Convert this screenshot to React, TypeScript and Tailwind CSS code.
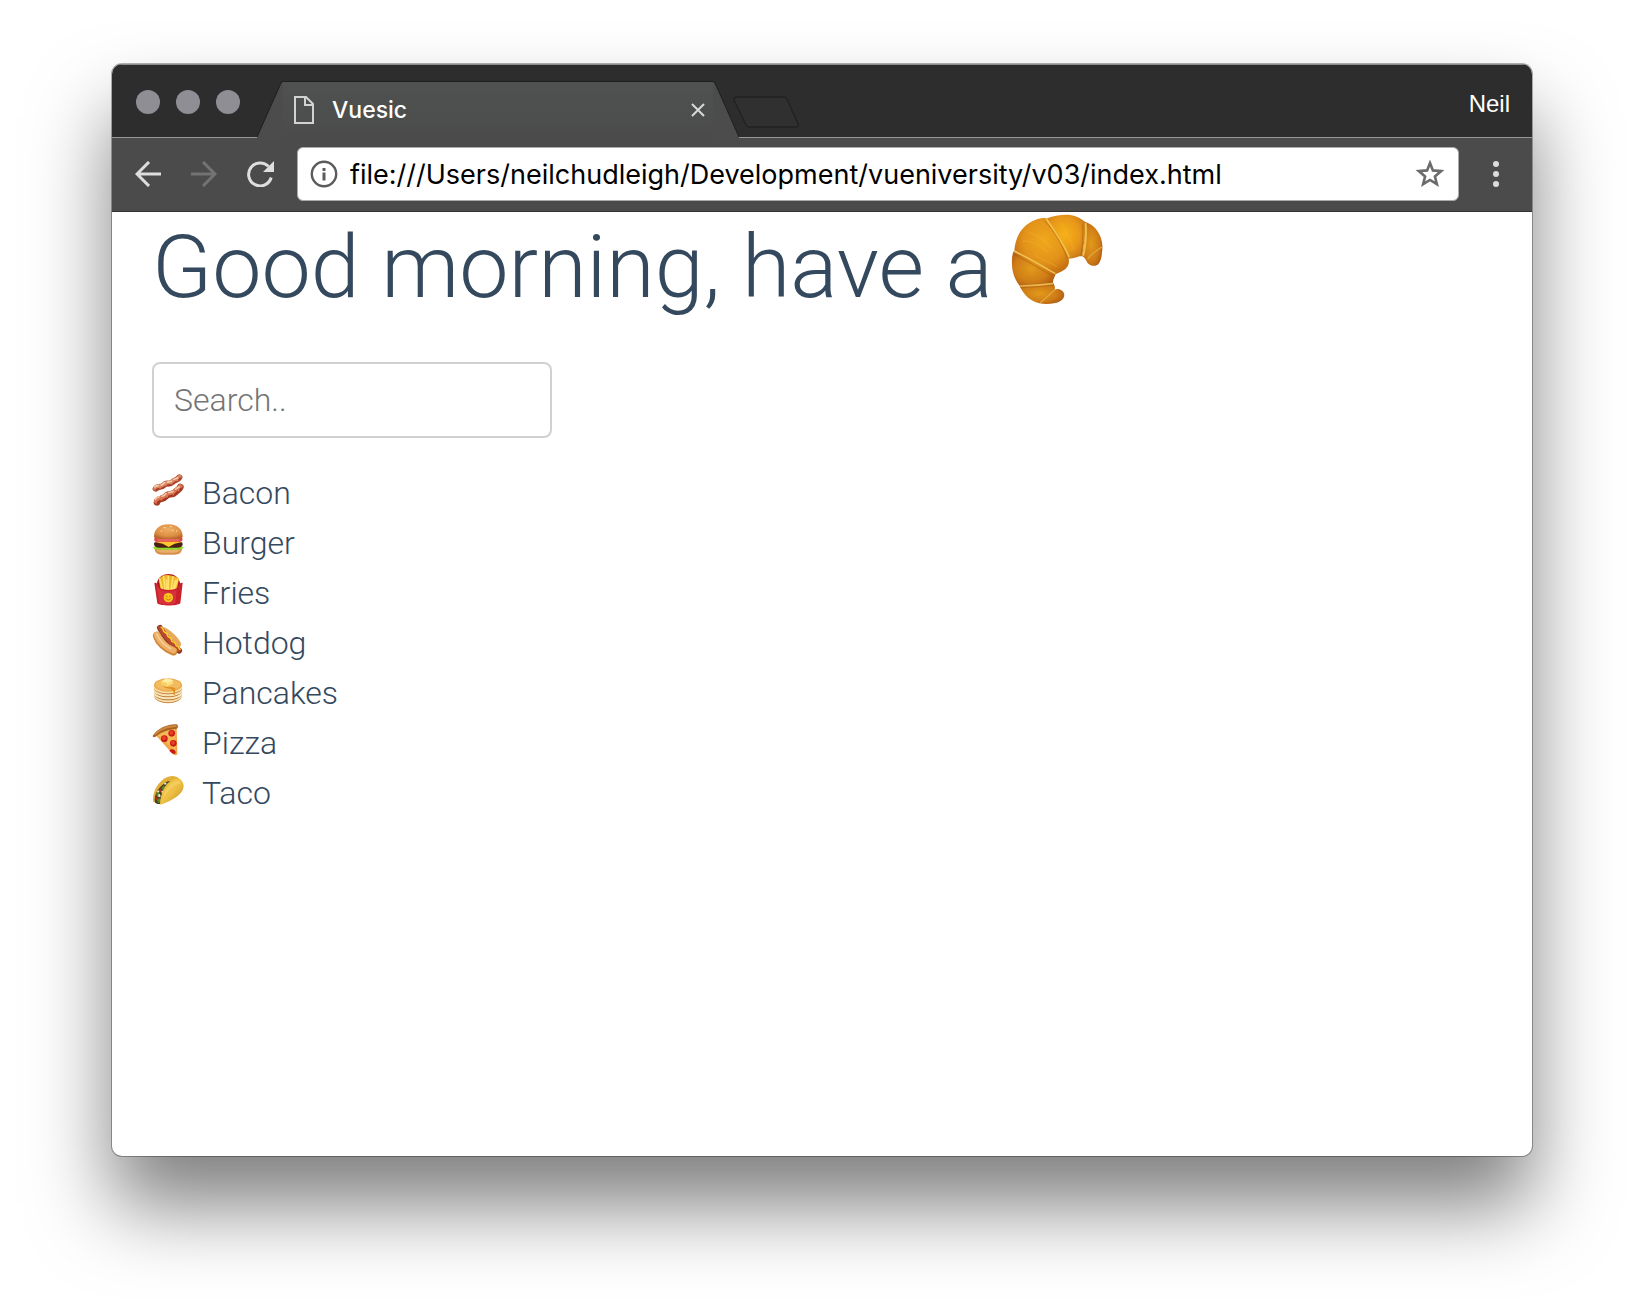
import React, { useState } from 'react';

type IconProps = { className?: string };

/* ---------- food drawings ---------- */

const Croissant: React.FC<IconProps> = ({ className }) => (
  <svg viewBox="33 27 276 276" className={className} role="img" aria-label="croissant">
    <defs>
      <radialGradient id="cr-a" cx="0.55" cy="0.4" r="0.65">
        <stop offset="0" stopColor="#f0a81c" />
        <stop offset="0.6" stopColor="#e2921a" />
        <stop offset="1" stopColor="#c06a12" />
      </radialGradient>
      <radialGradient id="cr-b" cx="0.45" cy="0.45" r="0.65">
        <stop offset="0" stopColor="#f6b116" />
        <stop offset="0.6" stopColor="#e8981a" />
        <stop offset="1" stopColor="#c27618" />
      </radialGradient>
      <radialGradient id="cr-c" cx="0.45" cy="0.5" r="0.65">
        <stop offset="0" stopColor="#e29a1a" />
        <stop offset="0.6" stopColor="#cf7c17" />
        <stop offset="1" stopColor="#a85510" />
      </radialGradient>
    </defs>
    <path fill="url(#cr-b)" d="M138 41C160 32 190 28 211 30C230 33 247 42 257 53C258 75 254 98 247 154C236 151 228 160 206 161C190 130 165 80 138 41Z" />
    <path fill="url(#cr-c)" d="M253 50C275 56 290 70 298 88C307 106 309 125 306 142C305 160 300 176 290 181C280 185 268 181 262 173C258 165 255 158 246 153C252 130 256 90 253 50Z" />
    <path fill="url(#cr-a)" d="M43 136C45 110 55 80 78 61C96 46 118 38 137 39C158 60 175 85 190 120C198 140 206 155 207 168C207 182 198 194 183 200C176 203 170 206 166 208C125 184 80 158 43 136Z" />
    <path fill="url(#cr-c)" d="M42 137C80 158 125 184 167 206C165 216 158 222 159 235C125 242 90 245 58 241C44 224 36 200 36 178C35 162 36 148 42 137Z" />
    <path fill="url(#cr-c)" d="M58 241C90 236 125 234 160 234C164 242 166 248 164 254C174 249 188 254 192 265C196 278 185 291 166 294C150 297 134 298 118 295C92 289 70 270 58 241Z" />
    <g fill="none" strokeLinecap="round">
      <path stroke="#b0600e" strokeWidth="3" opacity="0.6" d="M134 48C165 80 187 120 203 162M46 150C80 168 120 190 158 214M63 247C90 247 130 245 160 240M248 58C250 90 248 125 243 150" />
      <path stroke="#f0c04c" strokeWidth="5" d="M140 43C163 76 188 112 207 154" />
      <path stroke="#f0c04c" strokeWidth="5" d="M45 140C85 158 125 182 164 205" />
      <path stroke="#e7b54e" strokeWidth="5" d="M62 243C95 242 125 240 158 236" />
      <path stroke="#f0c04c" strokeWidth="6" d="M257 56C259 90 257 122 250 150" />
      <path stroke="#e2a63c" strokeWidth="4" d="M304 127C290 138 275 144 265 160M164 255C150 268 138 278 122 292" />
      <path stroke="#f6be3c" strokeWidth="4" opacity="0.25" d="M70 108C95 105 120 125 145 140M85 82C110 88 130 100 155 130M105 150C125 165 150 170 170 185M180 50C200 80 210 100 222 135" />
    </g>
  </svg>
);

const Bacon: React.FC<IconProps> = ({ className }) => (
  <svg viewBox="36 42 96 96" className={className} aria-hidden="true">
    <g strokeLinecap="round" strokeLinejoin="round" fill="none">
      <path stroke="#b0492e" strokeWidth="18" d="M47 86C54 76 62 86 72 75C80 66 88 76 98 66C106 58 112 62 118 52" />
      <path stroke="#dd8262" strokeWidth="12" d="M46 85C54 75 62 84 72 73C80 65 88 74 98 64C106 57 112 60 119 50" />
      <path stroke="#f6d0ac" strokeWidth="5" strokeDasharray="13 8" d="M44 81C52 72 62 80 70 71C78 62 88 70 96 62C104 54 110 58 118 49" />
      <path stroke="#a23a22" strokeWidth="4" strokeDasharray="9 10" d="M48 90C56 82 64 88 74 80C84 72 92 78 101 70C110 63 114 64 121 54" />
      <path stroke="#a23d25" strokeWidth="20" d="M51 127C54 112 66 122 78 109C86 98 96 108 107 96C112 88 116 92 121 81" />
      <path stroke="#da7656" strokeWidth="14" d="M49 124C54 110 66 120 77 107C86 97 96 106 106 93C112 86 116 90 121 79" />
      <path stroke="#f5c8a4" strokeWidth="5" strokeDasharray="14 9" d="M46 118C54 105 66 114 76 103C84 92 94 102 104 90C110 82 116 86 120 76" />
      <path stroke="#a5341d" strokeWidth="5" strokeDasharray="11 9" d="M52 129C58 118 68 125 80 113C90 103 98 110 109 99C114 93 118 94 123 85" />
    </g>
  </svg>
);

const Burger: React.FC<IconProps> = ({ className }) => (
  <svg viewBox="36 192 96 96" className={className} aria-hidden="true">
    <defs>
      <radialGradient id="bun" cx="0.5" cy="0.35" r="0.65">
        <stop offset="0" stopColor="#efad64" />
        <stop offset="0.7" stopColor="#de8f44" />
        <stop offset="1" stopColor="#b8692a" />
      </radialGradient>
    </defs>
    <path fill="#d8914d" d="M44 265H126C126 278 118 284 104 284H66C52 284 44 278 44 265Z" />
    <path fill="#e9ad6e" d="M50 270H120C116 276 108 278 100 278H70C60 278 54 276 50 270Z" />
    <path fill="#8fdc2c" d="M40 261C46 256 124 256 130 261C131 268 124 266 120 269C114 265 108 273 101 269C94 266 90 273 83 269C76 266 72 273 65 269C58 266 54 271 49 268C44 268 39 267 40 261Z" />
    <path fill="#4b2015" d="M42 252C42 246 50 244 56 244H114C122 244 128 247 128 252C128 260 122 263 112 263H58C48 263 42 259 42 252Z" />
    <path fill="#ffc72d" d="M44 246C60 241 110 241 127 246L104 251L86 261L68 251Z" />
    <path fill="#e0474a" d="M44 234H126C130 240 126 245 120 245H50C44 245 40 240 44 234Z" />
    <path fill="#f6a39a" d="M52 239H118V241H52Z" />
    <path fill="url(#bun)" d="M42 230C42 206 60 193 85 193C110 193 128 206 128 230C128 237 112 237 85 237C58 237 42 237 42 230Z" />
    <g fill="#fbe0ae">
      <ellipse cx="74" cy="203" rx="3" ry="2" />
      <ellipse cx="93" cy="200" rx="3" ry="2" />
      <ellipse cx="98" cy="211" rx="3" ry="2" />
      <ellipse cx="110" cy="213" rx="2" ry="2" />
      <ellipse cx="64" cy="213" rx="2" ry="2" />
    </g>
  </svg>
);

const Fries: React.FC<IconProps> = ({ className }) => (
  <svg viewBox="36 342 96 96" className={className} aria-hidden="true">
    <path fill="#b01822" d="M50 372C54 350 70 342 86 342C102 342 116 350 121 372V386H50Z" />
    <path fill="#f0b62a" d="M56 356L64 350L72 346L84 345L96 347L108 350L117 356L110 390H62Z" />
    <g stroke="#ffe06a" strokeWidth="5" strokeLinecap="round">
      <path d="M59 357L67 388M71 350L75 390M85 349V390M99 351L93 390M113 357L103 388M79 360L81 390M106 362L98 390" />
    </g>
    <path fill="#c9202c" d="M43 369C48 367 54 372 58 382C68 393 104 393 113 382C117 372 122 367 128 369L121 430C112 439 60 439 52 430Z" />
    <path fill="#e14046" d="M49 374C54 378 56 386 62 390C80 397 96 396 110 389L106 430C90 436 72 434 58 430Z" opacity="0.6" />
    <circle cx="85" cy="413" r="14" fill="#fdc51e" />
    <path d="M78 415C81 422 90 422 93 415M79 409H81M89 409H91" fill="none" stroke="#b55c10" strokeWidth="2.5" strokeLinecap="round" />
  </svg>
);

const Hotdog: React.FC<IconProps> = ({ className }) => (
  <svg viewBox="36 12 96 96" className={className} aria-hidden="true">
    <g fill="none" strokeLinecap="round" strokeLinejoin="round">
      <path stroke="#e8a85e" strokeWidth="20" d="M72 32C88 42 104 56 113 72" />
      <path stroke="#8e2f1f" strokeWidth="18" d="M60 24C70 44 94 74 117 92" />
      <path stroke="#b5492f" strokeWidth="12" d="M59 23C70 44 94 72 117 90" />
      <path stroke="#d08537" strokeWidth="25" d="M51 47C57 66 76 85 100 94" />
      <path stroke="#eeb068" strokeWidth="19" d="M51 45C59 64 78 82 100 91" />
      <path stroke="#f7cf90" strokeWidth="5" d="M50 42C57 58 72 75 92 86" />
      <path stroke="#ffcf26" strokeWidth="5" d="M64 22C74 26 66 36 76 38C86 39 78 50 88 52C98 53 90 64 100 66C109 67 104 77 113 79C118 81 116 86 120 88" />
    </g>
  </svg>
);

const Pancakes: React.FC<IconProps> = ({ className }) => (
  <svg viewBox="36 162 96 96" className={className} aria-hidden="true">
    <ellipse cx="84" cy="229" rx="41" ry="21" fill="#c98a43" />
    <ellipse cx="84" cy="226" rx="42" ry="21" fill="#f6dfae" />
    <ellipse cx="84" cy="221" rx="41" ry="20" fill="#b97a38" />
    <ellipse cx="84" cy="218" rx="43" ry="20" fill="#fae6bc" />
    <ellipse cx="84" cy="212" rx="41" ry="20" fill="#bf8040" />
    <ellipse cx="84" cy="209" rx="43" ry="20" fill="#f8e2b4" />
    <ellipse cx="84" cy="203" rx="42" ry="20" fill="#c98a43" />
    <ellipse cx="84" cy="200" rx="43" ry="20" fill="#f9dfa4" />
    <ellipse cx="84" cy="195" rx="42" ry="20" fill="#ecab4e" />
    <ellipse cx="84" cy="194" rx="37" ry="16" fill="#f3bb60" />
    <path fill="#e09222" d="M70 198C80 205 92 198 104 203C109 206 104 212 105 222C105 227 101 227 101 222C101 212 98 208 90 206C80 206 72 204 70 198Z" />
    <path fill="#fff0a8" d="M64 184L80 175L98 180L99 190L82 198L64 193Z" />
    <path fill="#f7d35c" d="M64 184L82 189V198L64 193Z" />
    <path fill="#fbdf7d" d="M82 189L98 181L99 190L82 198Z" />
  </svg>
);

const Pizza: React.FC<IconProps> = ({ className }) => (
  <svg viewBox="36 312 96 96" className={className} aria-hidden="true">
    <path fill="#f0a545" d="M45 343C62 330 86 323 110 322L112 403C108 408 102 405 98 402Z" />
    <path fill="#f8bf5c" d="M52 344C68 334 86 328 106 327L108 396Z" opacity="0.7" />
    <path fill="#a86324" d="M39 346C55 324 83 312 109 313C116 315 115 325 109 327C86 328 64 336 47 350C41 353 36 351 39 346Z" />
    <path fill="#cf8a3f" d="M42 343C58 325 84 315 108 316C111 318 110 321 107 321C84 322 62 330 46 345Z" />
    <g fill="#c81c14">
      <circle cx="95" cy="340" r="10" />
      <circle cx="73" cy="356" r="10" />
      <circle cx="100" cy="370" r="10" />
      <path d="M88 392C94 385 106 387 107 397C106 406 98 402 88 392Z" />
    </g>
    <g fill="#e6402c">
      <circle cx="94" cy="338" r="6" />
      <circle cx="72" cy="354" r="6" />
      <circle cx="99" cy="368" r="6" />
    </g>
  </svg>
);

const Taco: React.FC<IconProps> = ({ className }) => (
  <svg viewBox="36 462 96 96" className={className} aria-hidden="true">
    <defs>
      <linearGradient id="shell" x1="0" y1="0" x2="1" y2="1">
        <stop offset="0" stopColor="#e9b93c" />
        <stop offset="0.5" stopColor="#efc146" />
        <stop offset="1" stopColor="#c58b1c" />
      </linearGradient>
    </defs>
    <path fill="#e0b03a" d="M40 546C34 514 62 468 98 468C110 469 118 474 122 482L60 550Z" />
    <path fill="#4c3a1c" d="M45 546C40 526 58 496 84 484L98 486L62 552C54 553 46 551 45 546Z" />
    <path fill="#568a2a" d="M48 522L56 516L60 524L52 532ZM64 504L72 496L78 503L69 511ZM50 540L60 534L64 544L56 550ZM78 492L88 485L92 490L82 497Z" />
    <path fill="#b83222" d="M56 508L64 506L66 513L58 517ZM46 532L52 530L54 538L47 540ZM74 498L80 496L82 502L76 504Z" />
    <path fill="#f4ecd0" d="M64 514L71 511L73 519L66 521ZM54 524L60 522L62 530L56 532ZM72 490L78 488L80 493L74 494ZM51 514L56 511L58 516L53 518Z" />
    <path fill="url(#shell)" d="M60 552C62 520 74 488 104 476C120 470 132 486 131 500C128 526 94 541 66 553C62 555 60 555 60 552Z" />
    <path fill="#f7d66a" d="M68 540C70 516 84 492 106 482C114 480 120 484 122 490C104 494 80 512 68 540Z" opacity="0.6" />
  </svg>
);

const FOODS: { name: string; Icon: React.FC<IconProps> }[] = [
  { name: 'Bacon', Icon: Bacon },
  { name: 'Burger', Icon: Burger },
  { name: 'Fries', Icon: Fries },
  { name: 'Hotdog', Icon: Hotdog },
  { name: 'Pancakes', Icon: Pancakes },
  { name: 'Pizza', Icon: Pizza },
  { name: 'Taco', Icon: Taco },
];

/* ---------- browser chrome ---------- */

const TabStrip: React.FC = () => (
  <div className="flex h-[74px] items-stretch border-t border-[#8c8c8c] bg-[#2d2d2d]">
    <div className="flex w-[145px] shrink-0 items-center gap-4 border-b border-[#979797] pt-0.5 pl-6">
      <button aria-label="Close window" className="size-6 rounded-full bg-[#8f8e94]" />
      <button aria-label="Minimize window" className="size-6 rounded-full bg-[#8f8e94]" />
      <button aria-label="Zoom window" className="size-6 rounded-full bg-[#8f8e94]" />
    </div>

    <div className="flex min-w-0 max-w-[482px] flex-1 items-end">
      <svg viewBox="0 0 26 57" className="h-[57px] w-[26px] shrink-0">
        <path d="M0 57V56L24 2Q25 1 26 1V57Z" fill="#4c4c4c" />
        <path d="M0 56L24 2Q25 0.500 26 0.500" fill="none" stroke="#1e1e1e" />
      </svg>
      <div className="flex h-[57px] min-w-0 flex-1 items-center border-t border-[#1e1e1e] bg-linear-to-b from-[#4f5251] to-[#4b4b4b] pr-2 pl-[11px]">
        <svg viewBox="0 0 20 28" className="h-7 w-5 shrink-0" fill="none" stroke="#d2d2d2" strokeWidth="2">
          <path d="M1 1H12L19 8V27H1Z" />
          <path d="M11 1V9H19" />
        </svg>
        <span className="ml-[18px] flex-1 truncate font-['Inter','Liberation_Sans',sans-serif] text-[23px] font-medium text-white">
          Vuesic
        </span>
        <button aria-label="Close tab" className="shrink-0">
          <svg viewBox="0 0 14 14" className="size-3.5" stroke="#d8d8d8" strokeWidth="2">
            <path d="M1 1L13 13M13 1L1 13" />
          </svg>
        </button>
      </div>
      <svg viewBox="0 0 26 57" className="h-[57px] w-[26px] shrink-0">
        <path d="M26 57V56L2 2Q1 1 0 1V57Z" fill="#4c4c4c" />
        <path d="M26 56L2 2Q1 0.500 0 0.500" fill="none" stroke="#1e1e1e" />
      </svg>
    </div>

    <div className="flex flex-1 items-center justify-between border-b border-[#979797] pr-[22px]">
      <button aria-label="New tab" className="-ml-1.5 pt-[22px]">
        <svg viewBox="0 0 66 32" className="h-8 w-[66px]">
          <path
            d="M4 1H50Q53 1 54 3L65 28Q66 31 63 31H17Q14 31 13 29L1 4Q0 1 4 1Z"
            fill="#303030"
            stroke="#222222"
            strokeWidth="1.5"
          />
        </svg>
      </button>
      <button className="pt-1.5 font-['Liberation_Sans',Arial,sans-serif] text-2xl text-white">Neil</button>
    </div>
  </div>
);

const Toolbar: React.FC = () => {
  const [url, setUrl] = useState('file:///Users/neilchudleigh/Development/vueniversity/v03/index.html');

  return (
    <div className="flex h-[74px] items-center border-b border-[#333333] bg-[#4b4b4b] pr-[33px] pb-0.5 pl-[23px]">
      <div className="flex shrink-0 items-center gap-[30px]">
        <button aria-label="Back">
          <svg viewBox="0 0 26 26" className="size-[26px]" fill="none" stroke="#dedede" strokeWidth="3">
            <path d="M26 13H3M14 1L2 13L14 25" />
          </svg>
        </button>
        <button aria-label="Forward" disabled>
          <svg viewBox="0 0 26 26" className="size-[26px]" fill="none" stroke="#737373" strokeWidth="3">
            <path d="M0 13H23M12 1L24 13L12 25" />
          </svg>
        </button>
        <button aria-label="Reload">
          <svg viewBox="0 0 27 26" className="h-[26px] w-[27px]">
            <path d="M21.500 5.500A11.500 11.500 0 1 0 24.200 16.500" fill="none" stroke="#dedede" strokeWidth="3" />
            <path d="M27 0V11H16Z" fill="#dedede" />
          </svg>
        </button>
      </div>

      <div className="ml-[23px] flex h-[54px] min-w-0 flex-1 items-center rounded-md border border-[#a9aaa9] bg-white pr-[13px] pl-3">
        <svg viewBox="0 0 28 28" className="size-7 shrink-0" fill="none" stroke="#5b5b5d">
          <circle cx="14" cy="14" r="12.200" strokeWidth="2.400" />
          <path d="M14 12.500V20.500M14 8V11" strokeWidth="3" />
        </svg>
        <input
          aria-label="Address"
          value={url}
          onChange={e => setUrl(e.target.value)}
          className="ml-3 min-w-0 flex-1 bg-transparent pt-1 font-['Inter','Liberation_Sans',sans-serif] text-[27px] text-black outline-none"
        />
        <button aria-label="Bookmark this page" className="shrink-0">
          <svg viewBox="0 0 30 30" className="size-[30px]" fill="none" stroke="#6b6b6b" strokeWidth="2.600">
            <path d="M15 4L17.900 11.400L26.200 12.100L19.900 17.400L21.900 25.200L15 21L8.100 25.200L10.100 17.400L3.800 12.100L12.100 11.400Z" />
          </svg>
        </button>
      </div>

      <button aria-label="Menu" className="ml-[34px] shrink-0">
        <svg viewBox="0 0 6 26" className="h-[26px] w-1.5" fill="#dcdcdc">
          <circle cx="3" cy="3" r="3" />
          <circle cx="3" cy="13" r="3" />
          <circle cx="3" cy="23" r="3" />
        </svg>
      </button>
    </div>
  );
};

const App: React.FC = () => {
  const [query, setQuery] = useState('');
  const foods = FOODS.filter(f => f.name.toLowerCase().includes(query.toLowerCase()));

  return (
    <div className="flex min-h-screen flex-col overflow-hidden bg-white px-28 pt-16 pb-40">
      <div className="flex flex-1 flex-col overflow-hidden rounded-[10px] bg-white shadow-[0_0_0_1px_rgba(0,0,0,0.3),0_50px_80px_rgba(0,0,0,0.5)]">
        <TabStrip />
        <Toolbar />

        <main className="flex-1 px-10 font-['Roboto','Liberation_Sans',sans-serif] font-light text-[#34495e]">
          <h1 className="mb-10 flex items-start gap-[18px] text-[88px] leading-[110px]">
            Good morning, have a
            <Croissant className="mt-0.5 size-[92px]" />
          </h1>

          <input
            type="text"
            aria-label="Search"
            placeholder="Search.."
            value={query}
            onChange={e => setQuery(e.target.value)}
            className="mb-[30px] block h-[76px] w-full max-w-[400px] rounded-lg border-2 border-[#d1d1d1] px-5 text-[32px] outline-none placeholder:text-[#757575]"
          />

          <ul className="text-[32px] leading-[50px]">
            {foods.map(({ name, Icon }) => (
              <li key={name} className="flex items-center gap-[18px]">
                <Icon className="mb-1.5 size-8 overflow-visible" />
                {name}
              </li>
            ))}
          </ul>
        </main>
      </div>
    </div>
  );
};

export default App;
